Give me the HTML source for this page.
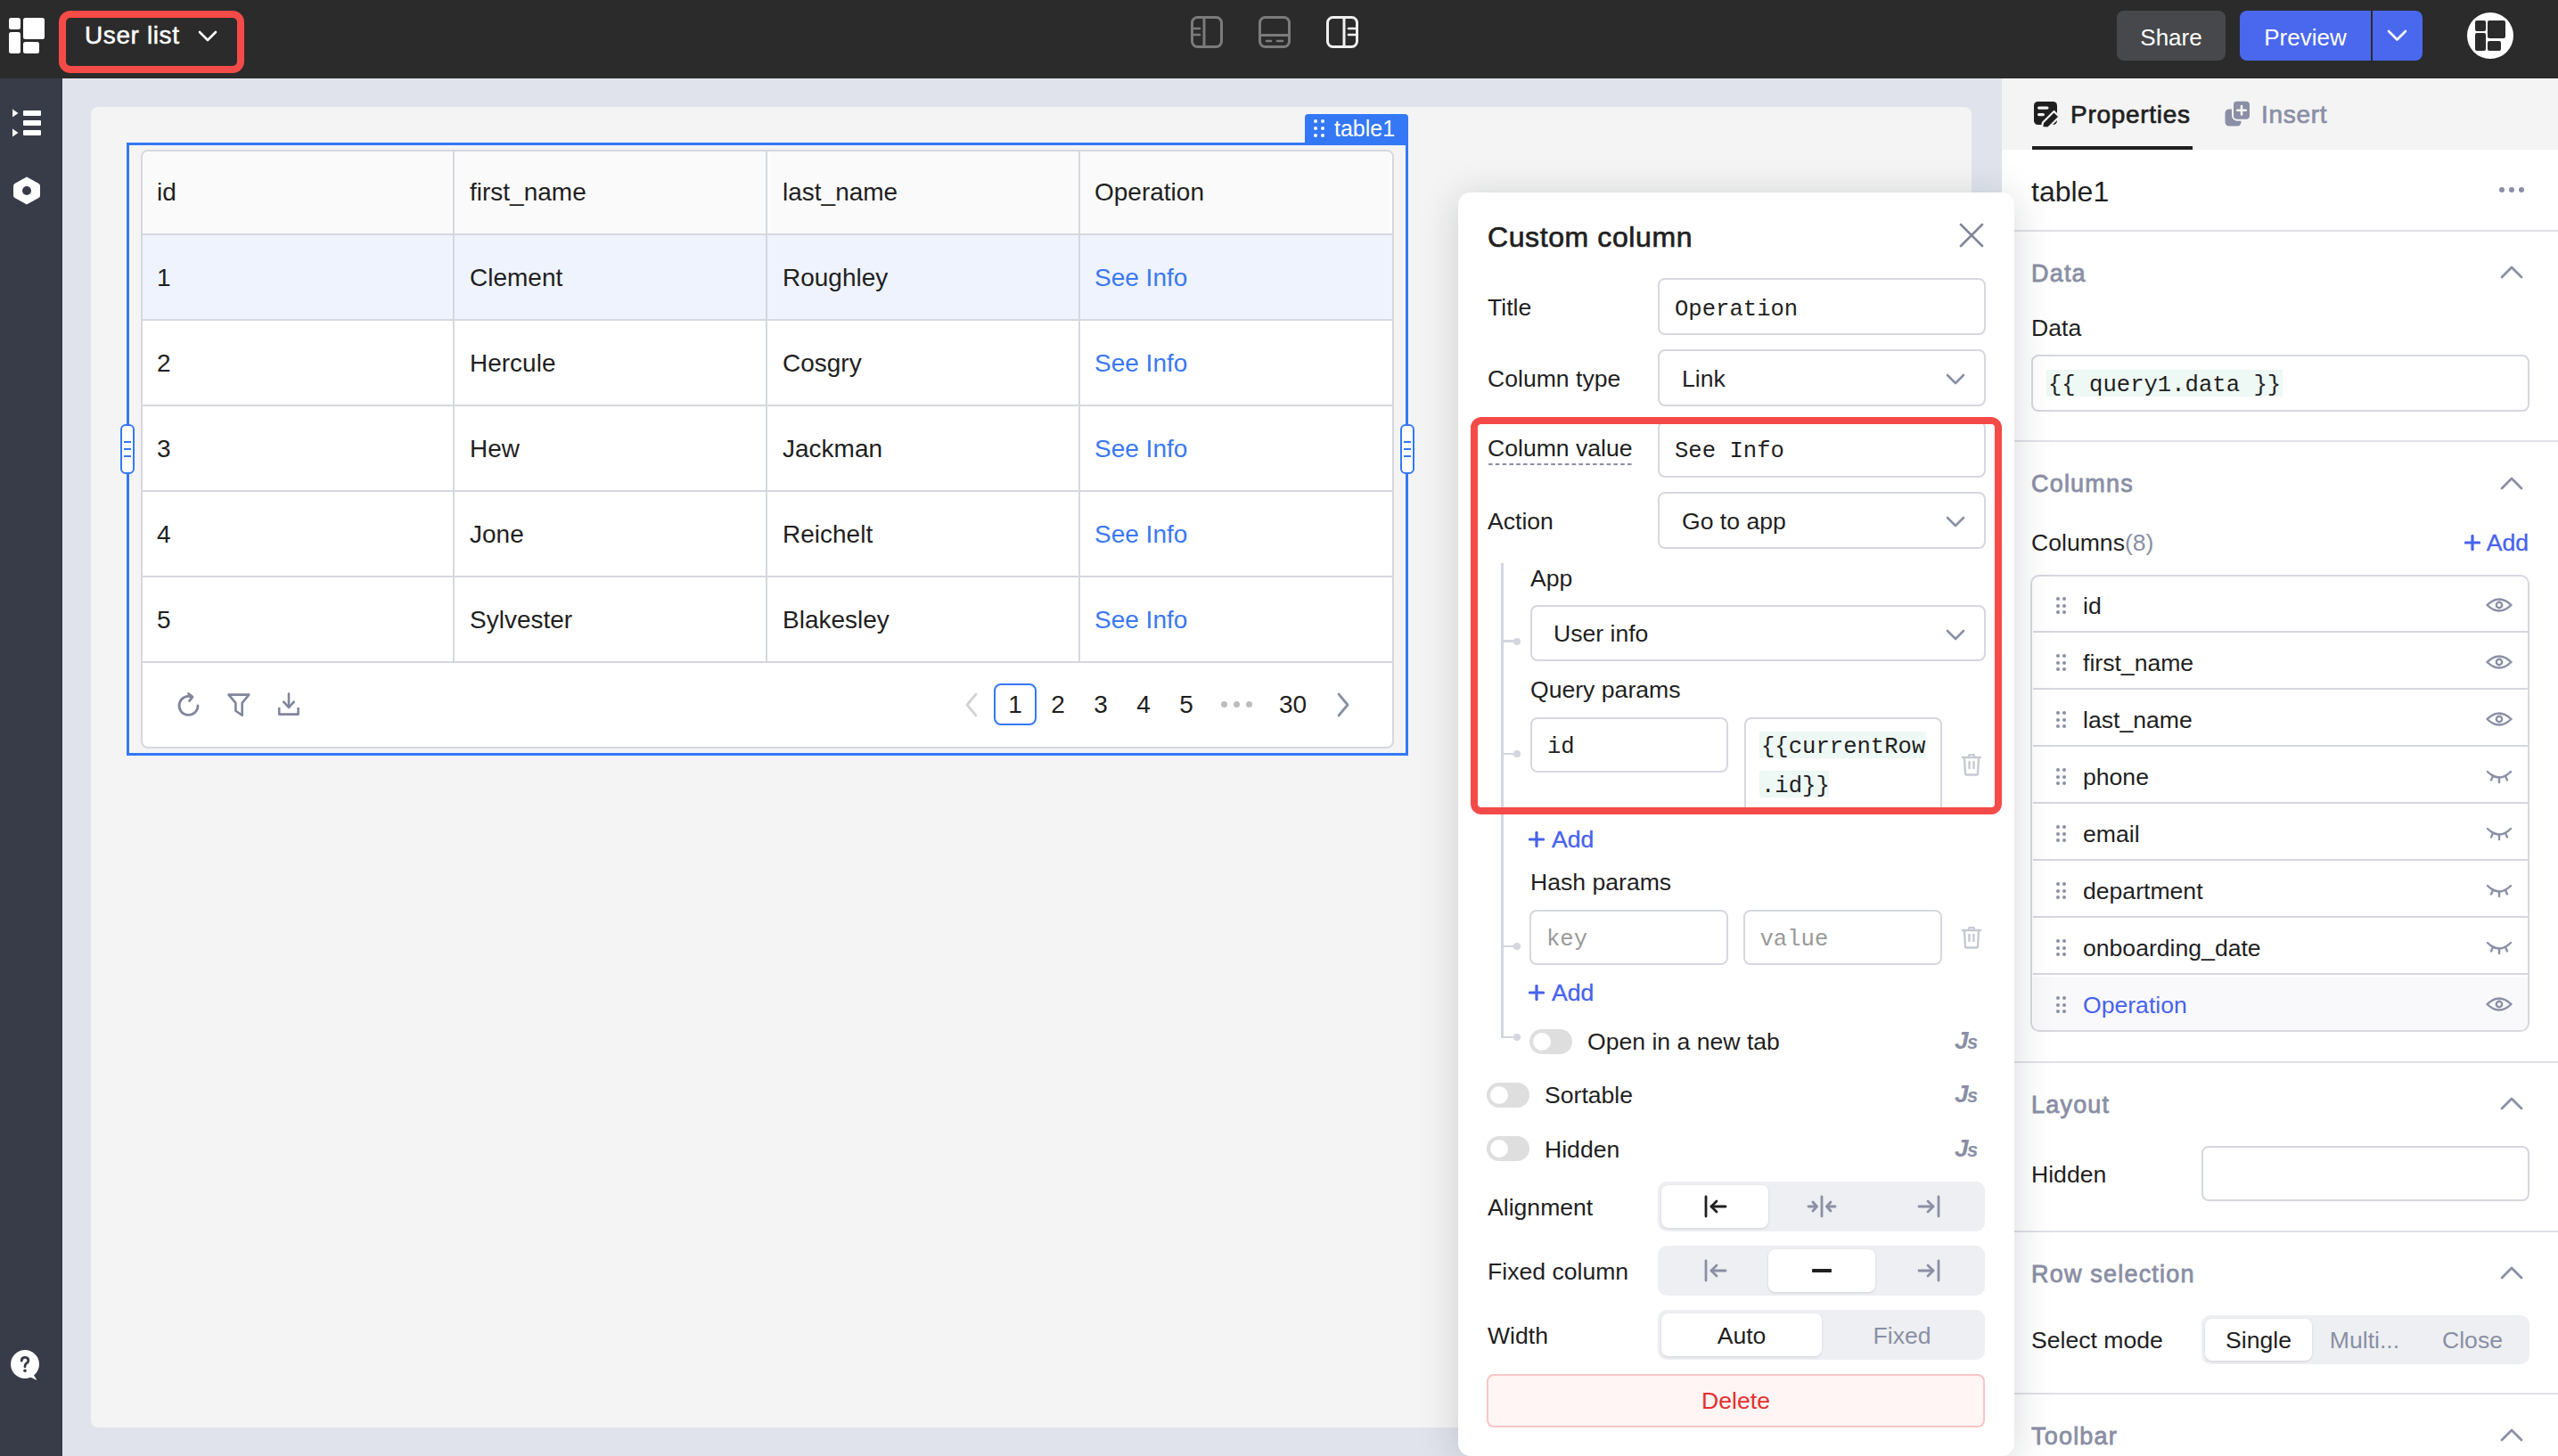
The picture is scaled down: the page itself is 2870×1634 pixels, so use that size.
<!DOCTYPE html>
<html><head><meta charset="utf-8"><title>User list</title>
<style>
html,body{margin:0;padding:0;}
body{width:2870px;height:1634px;overflow:hidden;position:relative;background:#e0e3eb;font-family:'Liberation Sans', sans-serif;}
</style></head><body>
<div style="position:absolute;left:0px;top:0px;width:2870px;height:88px;background:#2b2b2b"></div>
<div style="position:absolute;left:10px;top:20px;width:13px;height:13px;background:#fff;border-radius:2.5px"></div>
<div style="position:absolute;left:26px;top:20px;width:24px;height:24px;background:#fff;border-radius:2.5px"></div>
<div style="position:absolute;left:10px;top:36px;width:13px;height:24px;background:#fff;border-radius:2.5px"></div>
<div style="position:absolute;left:26px;top:47px;width:18px;height:13px;background:#fff;border-radius:2.5px"></div>
<div style="position:absolute;left:66px;top:12px;width:208px;height:70px;box-sizing:border-box;border:8px solid #f54b48;border-radius:13px"></div>
<div style="position:absolute;left:95px;top:26.30px;font:400 28px/28px 'Liberation Sans', sans-serif;color:#fff;white-space:nowrap;-webkit-text-stroke:0.5px #fff;letter-spacing:0.6px">User list</div>
<svg style="position:absolute;left:220px;top:30px;" width="26" height="20" viewBox="0 0 26 20"><polyline points="4,6 13,15 22,6" fill="none" stroke="#fff" stroke-width="2.6" stroke-linecap="round" stroke-linejoin="round"/></svg>
<svg style="position:absolute;left:1334px;top:16px;" width="40" height="40" viewBox="0 0 40 40"><rect x="3.5" y="3.5" width="33" height="33" rx="6" fill="none" stroke="#7b7b7b" stroke-width="3"/><line x1="17" y1="4" x2="17" y2="36" stroke="#7b7b7b" stroke-width="3"/><line x1="4" y1="16" x2="12" y2="16" stroke="#7b7b7b" stroke-width="2.6" stroke-linecap="round"/><line x1="4" y1="23" x2="12" y2="23" stroke="#7b7b7b" stroke-width="2.6" stroke-linecap="round"/></svg>
<svg style="position:absolute;left:1410px;top:16px;" width="40" height="40" viewBox="0 0 40 40"><rect x="3.5" y="3.5" width="33" height="33" rx="6" fill="none" stroke="#7b7b7b" stroke-width="3"/><line x1="4" y1="23.5" x2="36" y2="23.5" stroke="#7b7b7b" stroke-width="3"/><line x1="11" y1="30" x2="16" y2="30" stroke="#7b7b7b" stroke-width="2.6" stroke-linecap="round"/><line x1="23" y1="30" x2="29" y2="30" stroke="#7b7b7b" stroke-width="2.6" stroke-linecap="round"/></svg>
<svg style="position:absolute;left:1486px;top:16px;" width="40" height="40" viewBox="0 0 40 40"><rect x="3.5" y="3.5" width="33" height="33" rx="6" fill="none" stroke="#f0f0f0" stroke-width="3"/><line x1="22" y1="4" x2="22" y2="36" stroke="#f0f0f0" stroke-width="3"/><line x1="27" y1="16" x2="35" y2="16" stroke="#f0f0f0" stroke-width="2.6" stroke-linecap="round"/><line x1="27" y1="23" x2="35" y2="23" stroke="#f0f0f0" stroke-width="2.6" stroke-linecap="round"/></svg>
<div style="position:absolute;left:2375px;top:12px;width:122px;height:56px;background:#47484c;border-radius:8px"></div>
<div style="position:absolute;left:2036px;width:800px;text-align:center;top:28.99px;font:400 26px/26px 'Liberation Sans', sans-serif;color:#fff;white-space:nowrap;">Share</div>
<div style="position:absolute;left:2513px;top:12px;width:205px;height:56px;background:#4a68ee;border-radius:8px"></div>
<div style="position:absolute;left:2660px;top:12px;width:2px;height:56px;background:#2b2b2b"></div>
<div style="position:absolute;left:2186.5px;width:800px;text-align:center;top:28.99px;font:400 26px/26px 'Liberation Sans', sans-serif;color:#fff;white-space:nowrap;">Preview</div>
<svg style="position:absolute;left:2676px;top:30px;" width="28" height="20" viewBox="0 0 28 20"><polyline points="4,5 13.5,14.5 23,5" fill="none" stroke="#fff" stroke-width="2.6" stroke-linecap="round" stroke-linejoin="round"/></svg>
<div style="position:absolute;left:2768px;top:14px;width:52px;height:52px;background:#fff;border-radius:50%"></div>
<div style="position:absolute;left:2777px;top:23px;width:12px;height:12px;background:#2b2b2b;border-radius:2px"></div>
<div style="position:absolute;left:2791px;top:23px;width:20px;height:20px;background:#2b2b2b;border-radius:2px"></div>
<div style="position:absolute;left:2777px;top:37px;width:12px;height:20px;background:#2b2b2b;border-radius:2px"></div>
<div style="position:absolute;left:2791px;top:46px;width:15px;height:11px;background:#2b2b2b;border-radius:2px"></div>
<div style="position:absolute;left:0px;top:88px;width:70px;height:1546px;background:#383b48"></div>
<div style="position:absolute;left:70px;top:88px;width:1px;height:1546px;background:#e8eaf0"></div>
<svg style="position:absolute;left:12px;top:120px;" width="40" height="36" viewBox="0 0 40 36"><polygon points="2,2.5 8.5,7 2,11.5" fill="#fff"/><polygon points="2,24.5 8.5,29 2,33.5" fill="#fff"/><rect x="14" y="4" width="20" height="6" rx="1" fill="#fff"/><rect x="14" y="15" width="20" height="6" rx="1" fill="#fff"/><rect x="14" y="26" width="20" height="6" rx="1" fill="#fff"/></svg>
<svg style="position:absolute;left:12px;top:196px;" width="36" height="36" viewBox="0 0 36 36"><path d="M18 2.5 L31.5 10 Q33 11 33 12.5 L33 23.5 Q33 25 31.5 26 L18 33.5 L4.5 26 Q3 25 3 23.5 L3 12.5 Q3 11 4.5 10 Z" fill="#fff"/><circle cx="18" cy="18" r="5" fill="#383b48"/></svg>
<svg style="position:absolute;left:10px;top:1513px;" width="36" height="38" viewBox="0 0 36 38"><circle cx="18" cy="18" r="16" fill="#fff"/><path d="M25 27 Q29 31 31.5 36 Q27 34 21 31 Z" fill="#fff"/><path d="M14.2 14.2 Q14.2 10.3 18 10.3 Q21.8 10.3 21.8 13.8 Q21.8 16 19.3 17.3 Q18 18.2 18 20.8" fill="none" stroke="#383b48" stroke-width="2.8" stroke-linecap="round"/><circle cx="18" cy="25.2" r="1.8" fill="#383b48"/></svg>
<div style="position:absolute;left:102px;top:120px;width:2110px;height:1482px;background:#f4f4f4;border-radius:8px"></div>
<div style="position:absolute;left:158px;top:168px;width:1406px;height:672px;box-sizing:border-box;border:2px solid #d6d8df;border-radius:8px;background:#fff;overflow:hidden"></div>
<div style="position:absolute;left:160px;top:170px;width:1402px;height:92px;background:#fafafa;border-radius:6px 6px 0 0"></div>
<div style="position:absolute;left:160px;top:264px;width:1402px;height:94px;background:#eef3fe"></div>
<div style="position:absolute;left:160px;top:262px;width:1402px;height:2px;background:#d6d8df"></div>
<div style="position:absolute;left:160px;top:358px;width:1402px;height:2px;background:#d6d8df"></div>
<div style="position:absolute;left:160px;top:454px;width:1402px;height:2px;background:#d6d8df"></div>
<div style="position:absolute;left:160px;top:550px;width:1402px;height:2px;background:#d6d8df"></div>
<div style="position:absolute;left:160px;top:646px;width:1402px;height:2px;background:#d6d8df"></div>
<div style="position:absolute;left:160px;top:742px;width:1402px;height:2px;background:#d6d8df"></div>
<div style="position:absolute;left:508px;top:170px;width:2px;height:574px;background:#d6d8df"></div>
<div style="position:absolute;left:859px;top:170px;width:2px;height:574px;background:#d6d8df"></div>
<div style="position:absolute;left:1210px;top:170px;width:2px;height:574px;background:#d6d8df"></div>
<div style="position:absolute;left:176px;top:202.30px;font:400 28px/28px 'Liberation Sans', sans-serif;color:#1f1f1f;white-space:nowrap;">id</div>
<div style="position:absolute;left:527px;top:202.30px;font:400 28px/28px 'Liberation Sans', sans-serif;color:#1f1f1f;white-space:nowrap;">first_name</div>
<div style="position:absolute;left:878px;top:202.30px;font:400 28px/28px 'Liberation Sans', sans-serif;color:#1f1f1f;white-space:nowrap;">last_name</div>
<div style="position:absolute;left:1228px;top:202.30px;font:400 28px/28px 'Liberation Sans', sans-serif;color:#1f1f1f;white-space:nowrap;">Operation</div>
<div style="position:absolute;left:176px;top:297.80px;font:400 28px/28px 'Liberation Sans', sans-serif;color:#1f1f1f;white-space:nowrap;">1</div>
<div style="position:absolute;left:527px;top:297.80px;font:400 28px/28px 'Liberation Sans', sans-serif;color:#1f1f1f;white-space:nowrap;">Clement</div>
<div style="position:absolute;left:878px;top:297.80px;font:400 28px/28px 'Liberation Sans', sans-serif;color:#1f1f1f;white-space:nowrap;">Roughley</div>
<div style="position:absolute;left:1228px;top:297.80px;font:400 28px/28px 'Liberation Sans', sans-serif;color:#3a78f2;white-space:nowrap;">See Info</div>
<div style="position:absolute;left:176px;top:393.80px;font:400 28px/28px 'Liberation Sans', sans-serif;color:#1f1f1f;white-space:nowrap;">2</div>
<div style="position:absolute;left:527px;top:393.80px;font:400 28px/28px 'Liberation Sans', sans-serif;color:#1f1f1f;white-space:nowrap;">Hercule</div>
<div style="position:absolute;left:878px;top:393.80px;font:400 28px/28px 'Liberation Sans', sans-serif;color:#1f1f1f;white-space:nowrap;">Cosgry</div>
<div style="position:absolute;left:1228px;top:393.80px;font:400 28px/28px 'Liberation Sans', sans-serif;color:#3a78f2;white-space:nowrap;">See Info</div>
<div style="position:absolute;left:176px;top:489.80px;font:400 28px/28px 'Liberation Sans', sans-serif;color:#1f1f1f;white-space:nowrap;">3</div>
<div style="position:absolute;left:527px;top:489.80px;font:400 28px/28px 'Liberation Sans', sans-serif;color:#1f1f1f;white-space:nowrap;">Hew</div>
<div style="position:absolute;left:878px;top:489.80px;font:400 28px/28px 'Liberation Sans', sans-serif;color:#1f1f1f;white-space:nowrap;">Jackman</div>
<div style="position:absolute;left:1228px;top:489.80px;font:400 28px/28px 'Liberation Sans', sans-serif;color:#3a78f2;white-space:nowrap;">See Info</div>
<div style="position:absolute;left:176px;top:585.80px;font:400 28px/28px 'Liberation Sans', sans-serif;color:#1f1f1f;white-space:nowrap;">4</div>
<div style="position:absolute;left:527px;top:585.80px;font:400 28px/28px 'Liberation Sans', sans-serif;color:#1f1f1f;white-space:nowrap;">Jone</div>
<div style="position:absolute;left:878px;top:585.80px;font:400 28px/28px 'Liberation Sans', sans-serif;color:#1f1f1f;white-space:nowrap;">Reichelt</div>
<div style="position:absolute;left:1228px;top:585.80px;font:400 28px/28px 'Liberation Sans', sans-serif;color:#3a78f2;white-space:nowrap;">See Info</div>
<div style="position:absolute;left:176px;top:681.80px;font:400 28px/28px 'Liberation Sans', sans-serif;color:#1f1f1f;white-space:nowrap;">5</div>
<div style="position:absolute;left:527px;top:681.80px;font:400 28px/28px 'Liberation Sans', sans-serif;color:#1f1f1f;white-space:nowrap;">Sylvester</div>
<div style="position:absolute;left:878px;top:681.80px;font:400 28px/28px 'Liberation Sans', sans-serif;color:#1f1f1f;white-space:nowrap;">Blakesley</div>
<div style="position:absolute;left:1228px;top:681.80px;font:400 28px/28px 'Liberation Sans', sans-serif;color:#3a78f2;white-space:nowrap;">See Info</div>
<svg style="position:absolute;left:196px;top:776px;" width="32" height="32" viewBox="0 0 32 32"><path d="M26 16 A10.5 10.5 0 1 1 19.5 6.2" fill="none" stroke="#80859a" stroke-width="2.8" stroke-linecap="round"/><polyline points="15.5,2.5 20,6.2 16.5,10.5" fill="none" stroke="#80859a" stroke-width="2.8" stroke-linecap="round" stroke-linejoin="round"/></svg>
<svg style="position:absolute;left:252px;top:776px;" width="32" height="32" viewBox="0 0 32 32"><path d="M4.5 3.6 L27.3 3.6 L19.7 12.8 L19.7 26.8 L12.4 21.8 L12.4 12.8 Z" fill="none" stroke="#80859a" stroke-width="2.6" stroke-linejoin="round"/></svg>
<svg style="position:absolute;left:308px;top:776px;" width="32" height="32" viewBox="0 0 32 32"><line x1="16" y1="2.5" x2="16" y2="18" stroke="#80859a" stroke-width="2.6" stroke-linecap="round"/><polyline points="10.2,11.6 16,17.8 21.8,11.6" fill="none" stroke="#80859a" stroke-width="2.6" stroke-linecap="round" stroke-linejoin="round"/><polyline points="5.2,18 5.2,25.6 26.6,25.6 26.6,18" fill="none" stroke="#80859a" stroke-width="2.6" stroke-linejoin="round"/></svg>
<svg style="position:absolute;left:1080px;top:776px;" width="20" height="30" viewBox="0 0 20 30"><polyline points="15,3 5,15 15,27" fill="none" stroke="#d3d3d3" stroke-width="2.8" stroke-linecap="round" stroke-linejoin="round"/></svg>
<div style="position:absolute;left:1115px;top:767px;width:48px;height:47px;box-sizing:border-box;border:2px solid #3478f6;border-radius:8px"></div>
<div style="position:absolute;left:739px;width:800px;text-align:center;top:777.30px;font:400 28px/28px 'Liberation Sans', sans-serif;color:#1f1f1f;white-space:nowrap;">1</div>
<div style="position:absolute;left:787px;width:800px;text-align:center;top:777.30px;font:400 28px/28px 'Liberation Sans', sans-serif;color:#1f1f1f;white-space:nowrap;">2</div>
<div style="position:absolute;left:835px;width:800px;text-align:center;top:777.30px;font:400 28px/28px 'Liberation Sans', sans-serif;color:#1f1f1f;white-space:nowrap;">3</div>
<div style="position:absolute;left:883px;width:800px;text-align:center;top:777.30px;font:400 28px/28px 'Liberation Sans', sans-serif;color:#1f1f1f;white-space:nowrap;">4</div>
<div style="position:absolute;left:931px;width:800px;text-align:center;top:777.30px;font:400 28px/28px 'Liberation Sans', sans-serif;color:#1f1f1f;white-space:nowrap;">5</div>
<div style="position:absolute;left:1050.5px;width:800px;text-align:center;top:777.30px;font:400 28px/28px 'Liberation Sans', sans-serif;color:#1f1f1f;white-space:nowrap;">30</div>
<div style="position:absolute;left:1370.0px;top:786.5px;width:7px;height:7px;background:#bdbdbd;border-radius:50%"></div>
<div style="position:absolute;left:1384.0px;top:786.5px;width:7px;height:7px;background:#bdbdbd;border-radius:50%"></div>
<div style="position:absolute;left:1398.0px;top:786.5px;width:7px;height:7px;background:#bdbdbd;border-radius:50%"></div>
<svg style="position:absolute;left:1497px;top:776px;" width="20" height="30" viewBox="0 0 20 30"><polyline points="5,3 15,15 5,27" fill="none" stroke="#8a8fa3" stroke-width="2.8" stroke-linecap="round" stroke-linejoin="round"/></svg>
<div style="position:absolute;left:142px;top:160px;width:1438px;height:688px;box-sizing:border-box;border:3px solid #3478f6"></div>
<div style="position:absolute;left:1464px;top:128px;width:116px;height:35px;background:#3478f6;border-radius:4px 4px 0 0"></div>
<div style="position:absolute;left:1474px;top:134px;width:4px;height:4px;background:#fff;border-radius:50%"></div>
<div style="position:absolute;left:1474px;top:142px;width:4px;height:4px;background:#fff;border-radius:50%"></div>
<div style="position:absolute;left:1474px;top:150px;width:4px;height:4px;background:#fff;border-radius:50%"></div>
<div style="position:absolute;left:1482px;top:134px;width:4px;height:4px;background:#fff;border-radius:50%"></div>
<div style="position:absolute;left:1482px;top:142px;width:4px;height:4px;background:#fff;border-radius:50%"></div>
<div style="position:absolute;left:1482px;top:150px;width:4px;height:4px;background:#fff;border-radius:50%"></div>
<div style="position:absolute;left:1497px;top:131.84px;font:400 25px/25px 'Liberation Sans', sans-serif;color:#fff;white-space:nowrap;">table1</div>
<div style="position:absolute;left:135px;top:476px;width:16px;height:56px;box-sizing:border-box;border:2px solid #3478f6;border-radius:6px;background:#fff"></div>
<div style="position:absolute;left:139px;top:495px;width:8px;height:2px;background:#3478f6"></div>
<div style="position:absolute;left:139px;top:503px;width:8px;height:2px;background:#3478f6"></div>
<div style="position:absolute;left:139px;top:511px;width:8px;height:2px;background:#3478f6"></div>
<div style="position:absolute;left:1571px;top:476px;width:16px;height:56px;box-sizing:border-box;border:2px solid #3478f6;border-radius:6px;background:#fff"></div>
<div style="position:absolute;left:1575px;top:495px;width:8px;height:2px;background:#3478f6"></div>
<div style="position:absolute;left:1575px;top:503px;width:8px;height:2px;background:#3478f6"></div>
<div style="position:absolute;left:1575px;top:511px;width:8px;height:2px;background:#3478f6"></div>
<div style="position:absolute;left:2246px;top:88px;width:624px;height:1546px;background:#fff;z-index:0"></div>
<div style="position:absolute;left:2246px;top:88px;width:624px;height:80px;background:#f4f4f4"></div>
<svg style="position:absolute;left:2280px;top:112px;" width="32" height="32" viewBox="0 0 32 32"><rect x="2" y="2" width="26" height="26" rx="4.5" fill="#1f1f1f"/><rect x="6" y="7.5" width="12.5" height="3.2" rx="1.6" fill="#f4f4f4"/><rect x="6" y="15" width="8" height="3.2" rx="1.6" fill="#f4f4f4"/><path d="M11 31 L12 25.5 L24.5 13 L30.5 19 L18 31.5 Z" fill="#1f1f1f" stroke="#f4f4f4" stroke-width="2.2" stroke-linejoin="round"/></svg>
<div style="position:absolute;left:2323px;top:115.30px;font:400 28px/28px 'Liberation Sans', sans-serif;color:#1f1f1f;white-space:nowrap;-webkit-text-stroke:0.7px #1f1f1f;letter-spacing:0.7px">Properties</div>
<div style="position:absolute;left:2280px;top:164px;width:180px;height:4px;background:#1f1f1f"></div>
<svg style="position:absolute;left:2494px;top:112px;" width="32" height="32" viewBox="0 0 32 32"><rect x="2.5" y="10.5" width="18" height="19" rx="4.5" fill="#8a8fa5"/><rect x="11" y="0.8" width="20" height="22" rx="5" fill="#8a8fa5" stroke="#f4f4f4" stroke-width="2"/><line x1="21" y1="7" x2="21" y2="16.5" stroke="#f4f4f4" stroke-width="2.6" stroke-linecap="round"/><line x1="16.2" y1="11.8" x2="25.8" y2="11.8" stroke="#f4f4f4" stroke-width="2.6" stroke-linecap="round"/></svg>
<div style="position:absolute;left:2537px;top:115.30px;font:400 28px/28px 'Liberation Sans', sans-serif;color:#8a8fa5;white-space:nowrap;-webkit-text-stroke:0.7px #8a8fa5;letter-spacing:0.7px">Insert</div>
<div style="position:absolute;left:2279px;top:198.91px;font:400 32px/32px 'Liberation Sans', sans-serif;color:#1f1f1f;white-space:nowrap;">table1</div>
<div style="position:absolute;left:2804px;top:209.5px;width:6px;height:6px;background:#8a8fa5;border-radius:50%"></div>
<div style="position:absolute;left:2815px;top:209.5px;width:6px;height:6px;background:#8a8fa5;border-radius:50%"></div>
<div style="position:absolute;left:2826px;top:209.5px;width:6px;height:6px;background:#8a8fa5;border-radius:50%"></div>
<div style="position:absolute;left:2246px;top:258px;width:624px;height:2px;background:#dfe1e7"></div>
<div style="position:absolute;left:2279px;top:294.14px;font:400 27px/27px 'Liberation Sans', sans-serif;color:#8a8fa5;white-space:nowrap;-webkit-text-stroke:0.8px #8a8fa5;letter-spacing:1.2px">Data</div>
<svg style="position:absolute;left:2804px;top:297px;" width="28" height="18" viewBox="0 0 28 18"><polyline points="3,14 14,3 25,14" fill="none" stroke="#8a8fa5" stroke-width="2.8" stroke-linecap="round" stroke-linejoin="round"/></svg>
<div style="position:absolute;left:2279px;top:355.48px;font:400 26.6px/26.6px 'Liberation Sans', sans-serif;color:#1f1f1f;white-space:nowrap;">Data</div>
<div style="position:absolute;left:2279px;top:398px;width:559px;height:64px;box-sizing:border-box;border:2px solid #d6d8df;border-radius:8px;background:#fff"></div>
<div style="position:absolute;left:2296px;top:415px;width:265px;height:30px;background:#eef8f4"></div>
<div style="position:absolute;left:2298px;top:420.39px;font:400 25.6px/25.6px 'Liberation Mono', monospace;color:#1f1f1f;white-space:nowrap;">{{ query1.data }}</div>
<div style="position:absolute;left:2246px;top:494px;width:624px;height:2px;background:#dfe1e7"></div>
<div style="position:absolute;left:2279px;top:530.14px;font:400 27px/27px 'Liberation Sans', sans-serif;color:#8a8fa5;white-space:nowrap;-webkit-text-stroke:0.8px #8a8fa5;letter-spacing:1.2px">Columns</div>
<svg style="position:absolute;left:2804px;top:533.5px;" width="28" height="18" viewBox="0 0 28 18"><polyline points="3,14 14,3 25,14" fill="none" stroke="#8a8fa5" stroke-width="2.8" stroke-linecap="round" stroke-linejoin="round"/></svg>
<div style="position:absolute;left:2279px;top:596.48px;font:400 26.6px/26.6px 'Liberation Sans', sans-serif;color:#1f1f1f;white-space:nowrap;">Columns<span style='color:#8a8fa5'>(8)</span></div>
<svg style="position:absolute;left:2765px;top:600px;" width="18" height="18" viewBox="0 0 18 18"><line x1="9" y1="1.5" x2="9" y2="16.5" stroke="#4762ee" stroke-width="3.2" stroke-linecap="round"/><line x1="1.5" y1="9" x2="16.5" y2="9" stroke="#4762ee" stroke-width="3.2" stroke-linecap="round"/></svg>
<div style="position:absolute;right:33px;top:596.48px;font:400 26.6px/26.6px 'Liberation Sans', sans-serif;color:#4762ee;white-space:nowrap;-webkit-text-stroke:0.3px #4762ee">Add</div>
<div style="position:absolute;left:2278px;top:645px;width:560px;height:513px;box-sizing:border-box;border:2px solid #d6d8df;border-radius:10px;overflow:hidden;background:#fff"></div>
<div style="position:absolute;left:2281px;top:1096px;width:555px;height:60px;background:#f9f9fb;border-radius:0 0 8px 8px"></div>
<div style="position:absolute;left:2307px;top:670px;width:4px;height:4px;background:#8a8fa5;border-radius:50%"></div>
<div style="position:absolute;left:2307px;top:677.5px;width:4px;height:4px;background:#8a8fa5;border-radius:50%"></div>
<div style="position:absolute;left:2307px;top:685px;width:4px;height:4px;background:#8a8fa5;border-radius:50%"></div>
<div style="position:absolute;left:2314px;top:670px;width:4px;height:4px;background:#8a8fa5;border-radius:50%"></div>
<div style="position:absolute;left:2314px;top:677.5px;width:4px;height:4px;background:#8a8fa5;border-radius:50%"></div>
<div style="position:absolute;left:2314px;top:685px;width:4px;height:4px;background:#8a8fa5;border-radius:50%"></div>
<div style="position:absolute;left:2337px;top:666.98px;font:400 26.6px/26.6px 'Liberation Sans', sans-serif;color:#1f1f1f;white-space:nowrap;">id</div>
<svg style="position:absolute;left:2788px;top:667px;" width="32" height="24" viewBox="0 0 32 24"><path d="M2.5 12 Q16 -1 29.5 12 Q16 25 2.5 12 Z" fill="none" stroke="#8a8fa5" stroke-width="2.4" stroke-linejoin="round"/><circle cx="16" cy="12" r="3.2" fill="none" stroke="#8a8fa5" stroke-width="2.4"/></svg>
<div style="position:absolute;left:2281px;top:708px;width:555px;height:2px;background:#d6d8df"></div>
<div style="position:absolute;left:2307px;top:734px;width:4px;height:4px;background:#8a8fa5;border-radius:50%"></div>
<div style="position:absolute;left:2307px;top:741.5px;width:4px;height:4px;background:#8a8fa5;border-radius:50%"></div>
<div style="position:absolute;left:2307px;top:749px;width:4px;height:4px;background:#8a8fa5;border-radius:50%"></div>
<div style="position:absolute;left:2314px;top:734px;width:4px;height:4px;background:#8a8fa5;border-radius:50%"></div>
<div style="position:absolute;left:2314px;top:741.5px;width:4px;height:4px;background:#8a8fa5;border-radius:50%"></div>
<div style="position:absolute;left:2314px;top:749px;width:4px;height:4px;background:#8a8fa5;border-radius:50%"></div>
<div style="position:absolute;left:2337px;top:730.98px;font:400 26.6px/26.6px 'Liberation Sans', sans-serif;color:#1f1f1f;white-space:nowrap;">first_name</div>
<svg style="position:absolute;left:2788px;top:731px;" width="32" height="24" viewBox="0 0 32 24"><path d="M2.5 12 Q16 -1 29.5 12 Q16 25 2.5 12 Z" fill="none" stroke="#8a8fa5" stroke-width="2.4" stroke-linejoin="round"/><circle cx="16" cy="12" r="3.2" fill="none" stroke="#8a8fa5" stroke-width="2.4"/></svg>
<div style="position:absolute;left:2281px;top:772px;width:555px;height:2px;background:#d6d8df"></div>
<div style="position:absolute;left:2307px;top:798px;width:4px;height:4px;background:#8a8fa5;border-radius:50%"></div>
<div style="position:absolute;left:2307px;top:805.5px;width:4px;height:4px;background:#8a8fa5;border-radius:50%"></div>
<div style="position:absolute;left:2307px;top:813px;width:4px;height:4px;background:#8a8fa5;border-radius:50%"></div>
<div style="position:absolute;left:2314px;top:798px;width:4px;height:4px;background:#8a8fa5;border-radius:50%"></div>
<div style="position:absolute;left:2314px;top:805.5px;width:4px;height:4px;background:#8a8fa5;border-radius:50%"></div>
<div style="position:absolute;left:2314px;top:813px;width:4px;height:4px;background:#8a8fa5;border-radius:50%"></div>
<div style="position:absolute;left:2337px;top:794.98px;font:400 26.6px/26.6px 'Liberation Sans', sans-serif;color:#1f1f1f;white-space:nowrap;">last_name</div>
<svg style="position:absolute;left:2788px;top:795px;" width="32" height="24" viewBox="0 0 32 24"><path d="M2.5 12 Q16 -1 29.5 12 Q16 25 2.5 12 Z" fill="none" stroke="#8a8fa5" stroke-width="2.4" stroke-linejoin="round"/><circle cx="16" cy="12" r="3.2" fill="none" stroke="#8a8fa5" stroke-width="2.4"/></svg>
<div style="position:absolute;left:2281px;top:836px;width:555px;height:2px;background:#d6d8df"></div>
<div style="position:absolute;left:2307px;top:862px;width:4px;height:4px;background:#8a8fa5;border-radius:50%"></div>
<div style="position:absolute;left:2307px;top:869.5px;width:4px;height:4px;background:#8a8fa5;border-radius:50%"></div>
<div style="position:absolute;left:2307px;top:877px;width:4px;height:4px;background:#8a8fa5;border-radius:50%"></div>
<div style="position:absolute;left:2314px;top:862px;width:4px;height:4px;background:#8a8fa5;border-radius:50%"></div>
<div style="position:absolute;left:2314px;top:869.5px;width:4px;height:4px;background:#8a8fa5;border-radius:50%"></div>
<div style="position:absolute;left:2314px;top:877px;width:4px;height:4px;background:#8a8fa5;border-radius:50%"></div>
<div style="position:absolute;left:2337px;top:858.98px;font:400 26.6px/26.6px 'Liberation Sans', sans-serif;color:#1f1f1f;white-space:nowrap;">phone</div>
<svg style="position:absolute;left:2788px;top:859px;" width="32" height="24" viewBox="0 0 32 24"><path d="M3 7 Q16 20 29 7" fill="none" stroke="#8a8fa5" stroke-width="2.4" stroke-linecap="round"/><line x1="16" y1="14" x2="16" y2="19" stroke="#8a8fa5" stroke-width="2.4" stroke-linecap="round"/><line x1="9" y1="12" x2="7" y2="16.5" stroke="#8a8fa5" stroke-width="2.4" stroke-linecap="round"/><line x1="23" y1="12" x2="25" y2="16.5" stroke="#8a8fa5" stroke-width="2.4" stroke-linecap="round"/></svg>
<div style="position:absolute;left:2281px;top:900px;width:555px;height:2px;background:#d6d8df"></div>
<div style="position:absolute;left:2307px;top:926px;width:4px;height:4px;background:#8a8fa5;border-radius:50%"></div>
<div style="position:absolute;left:2307px;top:933.5px;width:4px;height:4px;background:#8a8fa5;border-radius:50%"></div>
<div style="position:absolute;left:2307px;top:941px;width:4px;height:4px;background:#8a8fa5;border-radius:50%"></div>
<div style="position:absolute;left:2314px;top:926px;width:4px;height:4px;background:#8a8fa5;border-radius:50%"></div>
<div style="position:absolute;left:2314px;top:933.5px;width:4px;height:4px;background:#8a8fa5;border-radius:50%"></div>
<div style="position:absolute;left:2314px;top:941px;width:4px;height:4px;background:#8a8fa5;border-radius:50%"></div>
<div style="position:absolute;left:2337px;top:922.98px;font:400 26.6px/26.6px 'Liberation Sans', sans-serif;color:#1f1f1f;white-space:nowrap;">email</div>
<svg style="position:absolute;left:2788px;top:923px;" width="32" height="24" viewBox="0 0 32 24"><path d="M3 7 Q16 20 29 7" fill="none" stroke="#8a8fa5" stroke-width="2.4" stroke-linecap="round"/><line x1="16" y1="14" x2="16" y2="19" stroke="#8a8fa5" stroke-width="2.4" stroke-linecap="round"/><line x1="9" y1="12" x2="7" y2="16.5" stroke="#8a8fa5" stroke-width="2.4" stroke-linecap="round"/><line x1="23" y1="12" x2="25" y2="16.5" stroke="#8a8fa5" stroke-width="2.4" stroke-linecap="round"/></svg>
<div style="position:absolute;left:2281px;top:964px;width:555px;height:2px;background:#d6d8df"></div>
<div style="position:absolute;left:2307px;top:990px;width:4px;height:4px;background:#8a8fa5;border-radius:50%"></div>
<div style="position:absolute;left:2307px;top:997.5px;width:4px;height:4px;background:#8a8fa5;border-radius:50%"></div>
<div style="position:absolute;left:2307px;top:1005px;width:4px;height:4px;background:#8a8fa5;border-radius:50%"></div>
<div style="position:absolute;left:2314px;top:990px;width:4px;height:4px;background:#8a8fa5;border-radius:50%"></div>
<div style="position:absolute;left:2314px;top:997.5px;width:4px;height:4px;background:#8a8fa5;border-radius:50%"></div>
<div style="position:absolute;left:2314px;top:1005px;width:4px;height:4px;background:#8a8fa5;border-radius:50%"></div>
<div style="position:absolute;left:2337px;top:986.98px;font:400 26.6px/26.6px 'Liberation Sans', sans-serif;color:#1f1f1f;white-space:nowrap;">department</div>
<svg style="position:absolute;left:2788px;top:987px;" width="32" height="24" viewBox="0 0 32 24"><path d="M3 7 Q16 20 29 7" fill="none" stroke="#8a8fa5" stroke-width="2.4" stroke-linecap="round"/><line x1="16" y1="14" x2="16" y2="19" stroke="#8a8fa5" stroke-width="2.4" stroke-linecap="round"/><line x1="9" y1="12" x2="7" y2="16.5" stroke="#8a8fa5" stroke-width="2.4" stroke-linecap="round"/><line x1="23" y1="12" x2="25" y2="16.5" stroke="#8a8fa5" stroke-width="2.4" stroke-linecap="round"/></svg>
<div style="position:absolute;left:2281px;top:1028px;width:555px;height:2px;background:#d6d8df"></div>
<div style="position:absolute;left:2307px;top:1054px;width:4px;height:4px;background:#8a8fa5;border-radius:50%"></div>
<div style="position:absolute;left:2307px;top:1061.5px;width:4px;height:4px;background:#8a8fa5;border-radius:50%"></div>
<div style="position:absolute;left:2307px;top:1069px;width:4px;height:4px;background:#8a8fa5;border-radius:50%"></div>
<div style="position:absolute;left:2314px;top:1054px;width:4px;height:4px;background:#8a8fa5;border-radius:50%"></div>
<div style="position:absolute;left:2314px;top:1061.5px;width:4px;height:4px;background:#8a8fa5;border-radius:50%"></div>
<div style="position:absolute;left:2314px;top:1069px;width:4px;height:4px;background:#8a8fa5;border-radius:50%"></div>
<div style="position:absolute;left:2337px;top:1050.98px;font:400 26.6px/26.6px 'Liberation Sans', sans-serif;color:#1f1f1f;white-space:nowrap;">onboarding_date</div>
<svg style="position:absolute;left:2788px;top:1051px;" width="32" height="24" viewBox="0 0 32 24"><path d="M3 7 Q16 20 29 7" fill="none" stroke="#8a8fa5" stroke-width="2.4" stroke-linecap="round"/><line x1="16" y1="14" x2="16" y2="19" stroke="#8a8fa5" stroke-width="2.4" stroke-linecap="round"/><line x1="9" y1="12" x2="7" y2="16.5" stroke="#8a8fa5" stroke-width="2.4" stroke-linecap="round"/><line x1="23" y1="12" x2="25" y2="16.5" stroke="#8a8fa5" stroke-width="2.4" stroke-linecap="round"/></svg>
<div style="position:absolute;left:2281px;top:1092px;width:555px;height:2px;background:#d6d8df"></div>
<div style="position:absolute;left:2307px;top:1118px;width:4px;height:4px;background:#8a8fa5;border-radius:50%"></div>
<div style="position:absolute;left:2307px;top:1125.5px;width:4px;height:4px;background:#8a8fa5;border-radius:50%"></div>
<div style="position:absolute;left:2307px;top:1133px;width:4px;height:4px;background:#8a8fa5;border-radius:50%"></div>
<div style="position:absolute;left:2314px;top:1118px;width:4px;height:4px;background:#8a8fa5;border-radius:50%"></div>
<div style="position:absolute;left:2314px;top:1125.5px;width:4px;height:4px;background:#8a8fa5;border-radius:50%"></div>
<div style="position:absolute;left:2314px;top:1133px;width:4px;height:4px;background:#8a8fa5;border-radius:50%"></div>
<div style="position:absolute;left:2337px;top:1114.98px;font:400 26.6px/26.6px 'Liberation Sans', sans-serif;color:#4762ee;white-space:nowrap;">Operation</div>
<svg style="position:absolute;left:2788px;top:1115px;" width="32" height="24" viewBox="0 0 32 24"><path d="M2.5 12 Q16 -1 29.5 12 Q16 25 2.5 12 Z" fill="none" stroke="#8a8fa5" stroke-width="2.4" stroke-linejoin="round"/><circle cx="16" cy="12" r="3.2" fill="none" stroke="#8a8fa5" stroke-width="2.4"/></svg>
<div style="position:absolute;left:2246px;top:1191px;width:624px;height:2px;background:#dfe1e7"></div>
<div style="position:absolute;left:2279px;top:1227.14px;font:400 27px/27px 'Liberation Sans', sans-serif;color:#8a8fa5;white-space:nowrap;-webkit-text-stroke:0.8px #8a8fa5;letter-spacing:1.2px">Layout</div>
<svg style="position:absolute;left:2804px;top:1230px;" width="28" height="18" viewBox="0 0 28 18"><polyline points="3,14 14,3 25,14" fill="none" stroke="#8a8fa5" stroke-width="2.8" stroke-linecap="round" stroke-linejoin="round"/></svg>
<div style="position:absolute;left:2279px;top:1305.48px;font:400 26.6px/26.6px 'Liberation Sans', sans-serif;color:#1f1f1f;white-space:nowrap;">Hidden</div>
<div style="position:absolute;left:2470px;top:1286px;width:368px;height:62px;box-sizing:border-box;border:2px solid #d6d8df;border-radius:8px;background:#fff"></div>
<div style="position:absolute;left:2246px;top:1380.5px;width:624px;height:2px;background:#dfe1e7"></div>
<div style="position:absolute;left:2279px;top:1416.64px;font:400 27px/27px 'Liberation Sans', sans-serif;color:#8a8fa5;white-space:nowrap;-webkit-text-stroke:0.8px #8a8fa5;letter-spacing:1.2px">Row selection</div>
<svg style="position:absolute;left:2804px;top:1420px;" width="28" height="18" viewBox="0 0 28 18"><polyline points="3,14 14,3 25,14" fill="none" stroke="#8a8fa5" stroke-width="2.8" stroke-linecap="round" stroke-linejoin="round"/></svg>
<div style="position:absolute;left:2279px;top:1490.98px;font:400 26.6px/26.6px 'Liberation Sans', sans-serif;color:#1f1f1f;white-space:nowrap;">Select mode</div>
<div style="position:absolute;left:2470px;top:1475.5px;width:368px;height:55px;background:#eeeff2;border-radius:10px"></div>
<div style="position:absolute;left:2474px;top:1479.5px;width:120px;height:47.5px;background:#fff;border-radius:8px;box-shadow:0 1px 3px rgba(0,0,0,0.12)"></div>
<div style="position:absolute;left:2134px;width:800px;text-align:center;top:1490.98px;font:400 26.6px/26.6px 'Liberation Sans', sans-serif;color:#1f1f1f;white-space:nowrap;">Single</div>
<div style="position:absolute;left:2253px;width:800px;text-align:center;top:1490.98px;font:400 26.6px/26.6px 'Liberation Sans', sans-serif;color:#8a8fa5;white-space:nowrap;">Multi...</div>
<div style="position:absolute;left:2374px;width:800px;text-align:center;top:1490.98px;font:400 26.6px/26.6px 'Liberation Sans', sans-serif;color:#8a8fa5;white-space:nowrap;">Close</div>
<div style="position:absolute;left:2246px;top:1563px;width:624px;height:2px;background:#dfe1e7"></div>
<div style="position:absolute;left:2279px;top:1598.64px;font:400 27px/27px 'Liberation Sans', sans-serif;color:#8a8fa5;white-space:nowrap;-webkit-text-stroke:0.8px #8a8fa5;letter-spacing:1.2px">Toolbar</div>
<svg style="position:absolute;left:2804px;top:1602px;" width="28" height="18" viewBox="0 0 28 18"><polyline points="3,14 14,3 25,14" fill="none" stroke="#8a8fa5" stroke-width="2.8" stroke-linecap="round" stroke-linejoin="round"/></svg>
<div style="position:absolute;left:1636px;top:216px;width:624px;height:1418px;background:#fff;border-radius:14px;box-shadow:0 6px 44px rgba(20,24,40,0.17)"></div>
<div style="position:absolute;left:1669px;top:249.91px;font:400 32px/32px 'Liberation Sans', sans-serif;color:#1f1f1f;white-space:nowrap;-webkit-text-stroke:0.7px #1f1f1f;letter-spacing:0.6px">Custom column</div>
<svg style="position:absolute;left:2196px;top:248px;" width="32" height="32" viewBox="0 0 32 32"><line x1="4" y1="4" x2="28" y2="28" stroke="#80859a" stroke-width="2.6" stroke-linecap="round"/><line x1="28" y1="4" x2="4" y2="28" stroke="#80859a" stroke-width="2.6" stroke-linecap="round"/></svg>
<div style="position:absolute;left:1669px;top:332.48px;font:400 26.6px/26.6px 'Liberation Sans', sans-serif;color:#1f1f1f;white-space:nowrap;">Title</div>
<div style="position:absolute;left:1860px;top:312px;width:368px;height:64px;box-sizing:border-box;border:2px solid #d6d8df;border-radius:8px;background:#fff"></div>
<div style="position:absolute;left:1879px;top:335.39px;font:400 25.6px/25.6px 'Liberation Mono', monospace;color:#1f1f1f;white-space:nowrap;">Operation</div>
<div style="position:absolute;left:1669px;top:411.98px;font:400 26.6px/26.6px 'Liberation Sans', sans-serif;color:#1f1f1f;white-space:nowrap;">Column type</div>
<div style="position:absolute;left:1860px;top:392px;width:368px;height:64px;box-sizing:border-box;border:2px solid #d6d8df;border-radius:8px;background:#fff"></div>
<div style="position:absolute;left:1887px;top:411.98px;font:400 26.6px/26.6px 'Liberation Sans', sans-serif;color:#1f1f1f;white-space:nowrap;">Link</div>
<svg style="position:absolute;left:2182px;top:418px;" width="24" height="16" viewBox="0 0 24 16"><polyline points="3,3 12,12 21,3" fill="none" stroke="#8a8fa5" stroke-width="2.6" stroke-linecap="round" stroke-linejoin="round"/></svg>
<div style="position:absolute;left:1669px;top:490.48px;font:400 26.6px/26.6px 'Liberation Sans', sans-serif;color:#1f1f1f;white-space:nowrap;">Column value</div>
<svg style="position:absolute;left:1669px;top:519px;" width="164" height="4" viewBox="0 0 164 4"><line x1="1" y1="2" x2="163" y2="2" stroke="#8a8fa5" stroke-width="2" stroke-dasharray="4.6 3.2"/></svg>
<div style="position:absolute;left:1860px;top:472px;width:368px;height:64px;box-sizing:border-box;border:2px solid #d6d8df;border-radius:8px;background:#fff"></div>
<div style="position:absolute;left:1879px;top:494.39px;font:400 25.6px/25.6px 'Liberation Mono', monospace;color:#1f1f1f;white-space:nowrap;">See Info</div>
<div style="position:absolute;left:1669px;top:572.48px;font:400 26.6px/26.6px 'Liberation Sans', sans-serif;color:#1f1f1f;white-space:nowrap;">Action</div>
<div style="position:absolute;left:1860px;top:552px;width:368px;height:64px;box-sizing:border-box;border:2px solid #d6d8df;border-radius:8px;background:#fff"></div>
<div style="position:absolute;left:1887px;top:572.48px;font:400 26.6px/26.6px 'Liberation Sans', sans-serif;color:#1f1f1f;white-space:nowrap;">Go to app</div>
<svg style="position:absolute;left:2182px;top:578px;" width="24" height="16" viewBox="0 0 24 16"><polyline points="3,3 12,12 21,3" fill="none" stroke="#8a8fa5" stroke-width="2.6" stroke-linecap="round" stroke-linejoin="round"/></svg>
<div style="position:absolute;left:1684px;top:632px;width:2.5px;height:532px;background:#d3d6de"></div>
<div style="position:absolute;left:1686px;top:718.3px;width:14px;height:2.5px;background:#d3d6de"></div>
<div style="position:absolute;left:1698px;top:715.5px;width:8px;height:8px;background:#d3d6de;border-radius:50%"></div>
<div style="position:absolute;left:1686px;top:844.8px;width:14px;height:2.5px;background:#d3d6de"></div>
<div style="position:absolute;left:1698px;top:842px;width:8px;height:8px;background:#d3d6de;border-radius:50%"></div>
<div style="position:absolute;left:1686px;top:1060.8px;width:14px;height:2.5px;background:#d3d6de"></div>
<div style="position:absolute;left:1698px;top:1058px;width:8px;height:8px;background:#d3d6de;border-radius:50%"></div>
<div style="position:absolute;left:1684px;top:1162.8px;width:16px;height:2.5px;background:#d3d6de"></div>
<div style="position:absolute;left:1698px;top:1160px;width:8px;height:8px;background:#d3d6de;border-radius:50%"></div>
<div style="position:absolute;left:1717px;top:635.98px;font:400 26.6px/26.6px 'Liberation Sans', sans-serif;color:#1f1f1f;white-space:nowrap;">App</div>
<div style="position:absolute;left:1717px;top:679px;width:511px;height:63px;box-sizing:border-box;border:2px solid #d6d8df;border-radius:8px;background:#fff"></div>
<div style="position:absolute;left:1743px;top:698.48px;font:400 26.6px/26.6px 'Liberation Sans', sans-serif;color:#1f1f1f;white-space:nowrap;">User info</div>
<svg style="position:absolute;left:2182px;top:705px;" width="24" height="16" viewBox="0 0 24 16"><polyline points="3,3 12,12 21,3" fill="none" stroke="#8a8fa5" stroke-width="2.6" stroke-linecap="round" stroke-linejoin="round"/></svg>
<div style="position:absolute;left:1717px;top:761.48px;font:400 26.6px/26.6px 'Liberation Sans', sans-serif;color:#1f1f1f;white-space:nowrap;">Query params</div>
<div style="position:absolute;left:1717px;top:805px;width:222px;height:62px;box-sizing:border-box;border:2px solid #d6d8df;border-radius:8px;background:#fff"></div>
<div style="position:absolute;left:1736px;top:826.39px;font:400 25.6px/25.6px 'Liberation Mono', monospace;color:#1f1f1f;white-space:nowrap;">id</div>
<div style="position:absolute;left:1957px;top:805px;width:222px;height:108px;box-sizing:border-box;border:2px solid #d6d8df;border-radius:8px;background:#fff"></div>
<div style="position:absolute;left:1974px;top:821px;width:187px;height:30px;background:#eef8f4"></div>
<div style="position:absolute;left:1974px;top:865px;width:78px;height:30px;background:#eef8f4"></div>
<div style="position:absolute;left:1976px;top:826.39px;font:400 25.6px/25.6px 'Liberation Mono', monospace;color:#1f1f1f;white-space:nowrap;">{{currentRow</div>
<div style="position:absolute;left:1976px;top:869.89px;font:400 25.6px/25.6px 'Liberation Mono', monospace;color:#1f1f1f;white-space:nowrap;">.id}}</div>
<svg style="position:absolute;left:2199px;top:845px;" width="26" height="26" viewBox="0 0 26 26"><path d="M3 5 L23 5" stroke="#c6c9d3" stroke-width="2.4" stroke-linecap="round"/><path d="M9.5 5 L10.5 2 L15.5 2 L16.5 5" fill="none" stroke="#c6c9d3" stroke-width="2.2"/><path d="M5 6 L6 23 Q6 24.5 7.5 24.5 L18.5 24.5 Q20 24.5 20 23 L21 6" fill="none" stroke="#c6c9d3" stroke-width="2.4" stroke-linejoin="round"/><line x1="10.5" y1="10" x2="10.5" y2="17" stroke="#c6c9d3" stroke-width="2.4" stroke-linecap="round"/><line x1="15.5" y1="10" x2="15.5" y2="17" stroke="#c6c9d3" stroke-width="2.4" stroke-linecap="round"/></svg>
<div style="position:absolute;left:1650px;top:468px;width:596px;height:446px;box-sizing:border-box;border:8px solid #f54b48;border-radius:12px"></div>
<svg style="position:absolute;left:1715px;top:933px;" width="18" height="18" viewBox="0 0 18 18"><line x1="9" y1="1.5" x2="9" y2="16.5" stroke="#4762ee" stroke-width="3.2" stroke-linecap="round"/><line x1="1.5" y1="9" x2="16.5" y2="9" stroke="#4762ee" stroke-width="3.2" stroke-linecap="round"/></svg>
<div style="position:absolute;left:1741px;top:929.48px;font:400 26.6px/26.6px 'Liberation Sans', sans-serif;color:#4762ee;white-space:nowrap;-webkit-text-stroke:0.3px #4762ee">Add</div>
<div style="position:absolute;left:1717px;top:977.48px;font:400 26.6px/26.6px 'Liberation Sans', sans-serif;color:#1f1f1f;white-space:nowrap;">Hash params</div>
<div style="position:absolute;left:1716px;top:1021px;width:223px;height:62px;box-sizing:border-box;border:2px solid #d6d8df;border-radius:8px;background:#fff"></div>
<div style="position:absolute;left:1956px;top:1021px;width:223px;height:62px;box-sizing:border-box;border:2px solid #d6d8df;border-radius:8px;background:#fff"></div>
<div style="position:absolute;left:1735px;top:1042.39px;font:400 25.6px/25.6px 'Liberation Mono', monospace;color:#9a9a9a;white-space:nowrap;">key</div>
<div style="position:absolute;left:1974.5px;top:1042.39px;font:400 25.6px/25.6px 'Liberation Mono', monospace;color:#9a9a9a;white-space:nowrap;">value</div>
<svg style="position:absolute;left:2199px;top:1039px;" width="26" height="26" viewBox="0 0 26 26"><path d="M3 5 L23 5" stroke="#c6c9d3" stroke-width="2.4" stroke-linecap="round"/><path d="M9.5 5 L10.5 2 L15.5 2 L16.5 5" fill="none" stroke="#c6c9d3" stroke-width="2.2"/><path d="M5 6 L6 23 Q6 24.5 7.5 24.5 L18.5 24.5 Q20 24.5 20 23 L21 6" fill="none" stroke="#c6c9d3" stroke-width="2.4" stroke-linejoin="round"/><line x1="10.5" y1="10" x2="10.5" y2="17" stroke="#c6c9d3" stroke-width="2.4" stroke-linecap="round"/><line x1="15.5" y1="10" x2="15.5" y2="17" stroke="#c6c9d3" stroke-width="2.4" stroke-linecap="round"/></svg>
<svg style="position:absolute;left:1715px;top:1104.5px;" width="18" height="18" viewBox="0 0 18 18"><line x1="9" y1="1.5" x2="9" y2="16.5" stroke="#4762ee" stroke-width="3.2" stroke-linecap="round"/><line x1="1.5" y1="9" x2="16.5" y2="9" stroke="#4762ee" stroke-width="3.2" stroke-linecap="round"/></svg>
<div style="position:absolute;left:1741px;top:1100.98px;font:400 26.6px/26.6px 'Liberation Sans', sans-serif;color:#4762ee;white-space:nowrap;-webkit-text-stroke:0.3px #4762ee">Add</div>
<div style="position:absolute;left:1716px;top:1155px;width:48px;height:28px;background:#dedede;border-radius:14px"></div>
<div style="position:absolute;left:1720px;top:1159px;width:20px;height:20px;background:#fff;border-radius:50%"></div>
<div style="position:absolute;left:1781px;top:1155.98px;font:400 26.6px/26.6px 'Liberation Sans', sans-serif;color:#1f1f1f;white-space:nowrap;">Open in a new tab</div>
<div style="position:absolute;left:2193px;top:1154.30px;font:700 28px/28px 'Liberation Sans', sans-serif;color:#8a8fa5;white-space:nowrap;font-style:italic;letter-spacing:-1.5px">J<span style='font-size:22px'>s</span></div>
<div style="position:absolute;left:1668px;top:1215px;width:48px;height:28px;background:#dedede;border-radius:14px"></div>
<div style="position:absolute;left:1672px;top:1219px;width:20px;height:20px;background:#fff;border-radius:50%"></div>
<div style="position:absolute;left:1733px;top:1215.98px;font:400 26.6px/26.6px 'Liberation Sans', sans-serif;color:#1f1f1f;white-space:nowrap;">Sortable</div>
<div style="position:absolute;left:2193px;top:1214.30px;font:700 28px/28px 'Liberation Sans', sans-serif;color:#8a8fa5;white-space:nowrap;font-style:italic;letter-spacing:-1.5px">J<span style='font-size:22px'>s</span></div>
<div style="position:absolute;left:1668px;top:1275px;width:48px;height:28px;background:#dedede;border-radius:14px"></div>
<div style="position:absolute;left:1672px;top:1279px;width:20px;height:20px;background:#fff;border-radius:50%"></div>
<div style="position:absolute;left:1733px;top:1276.98px;font:400 26.6px/26.6px 'Liberation Sans', sans-serif;color:#1f1f1f;white-space:nowrap;">Hidden</div>
<div style="position:absolute;left:2193px;top:1275.30px;font:700 28px/28px 'Liberation Sans', sans-serif;color:#8a8fa5;white-space:nowrap;font-style:italic;letter-spacing:-1.5px">J<span style='font-size:22px'>s</span></div>
<div style="position:absolute;left:1860px;top:1326px;width:367px;height:56px;background:#eeeff2;border-radius:10px"></div>
<div style="position:absolute;left:1864px;top:1330px;width:120px;height:48px;background:#fff;border-radius:8px;box-shadow:0 1px 3px rgba(0,0,0,0.12)"></div>
<div style="position:absolute;left:1669px;top:1342.48px;font:400 26.6px/26.6px 'Liberation Sans', sans-serif;color:#1f1f1f;white-space:nowrap;">Alignment</div>
<svg style="position:absolute;left:1911px;top:1341px;" width="28" height="26" viewBox="0 0 28 26"><line x1="3" y1="2" x2="3" y2="24" stroke="#1f1f1f" stroke-width="2.8" stroke-linecap="round"/><line x1="9" y1="13" x2="25" y2="13" stroke="#1f1f1f" stroke-width="2.8" stroke-linecap="round"/><polyline points="15,7 9,13 15,19" fill="none" stroke="#1f1f1f" stroke-width="2.8" stroke-linecap="round" stroke-linejoin="round"/></svg>
<svg style="position:absolute;left:2027px;top:1341px;" width="34" height="26" viewBox="0 0 34 26"><line x1="17" y1="2" x2="17" y2="24" stroke="#8a8fa5" stroke-width="2.8" stroke-linecap="round"/><line x1="2" y1="13" x2="11" y2="13" stroke="#8a8fa5" stroke-width="2.8" stroke-linecap="round"/><polyline points="7,8 11.5,13 7,18" fill="none" stroke="#8a8fa5" stroke-width="2.8" stroke-linecap="round" stroke-linejoin="round"/><line x1="23" y1="13" x2="32" y2="13" stroke="#8a8fa5" stroke-width="2.8" stroke-linecap="round"/><polyline points="27,8 22.5,13 27,18" fill="none" stroke="#8a8fa5" stroke-width="2.8" stroke-linecap="round" stroke-linejoin="round"/></svg>
<svg style="position:absolute;left:2150px;top:1341px;" width="28" height="26" viewBox="0 0 28 26"><line x1="25" y1="2" x2="25" y2="24" stroke="#8a8fa5" stroke-width="2.8" stroke-linecap="round"/><line x1="3" y1="13" x2="19" y2="13" stroke="#8a8fa5" stroke-width="2.8" stroke-linecap="round"/><polyline points="13,7 19,13 13,19" fill="none" stroke="#8a8fa5" stroke-width="2.8" stroke-linecap="round" stroke-linejoin="round"/></svg>
<div style="position:absolute;left:1860px;top:1398px;width:367px;height:56px;background:#eeeff2;border-radius:10px"></div>
<div style="position:absolute;left:1984px;top:1402px;width:120px;height:48px;background:#fff;border-radius:8px;box-shadow:0 1px 3px rgba(0,0,0,0.12)"></div>
<div style="position:absolute;left:1669px;top:1414.48px;font:400 26.6px/26.6px 'Liberation Sans', sans-serif;color:#1f1f1f;white-space:nowrap;">Fixed column</div>
<svg style="position:absolute;left:1911px;top:1413px;" width="28" height="26" viewBox="0 0 28 26"><line x1="3" y1="2" x2="3" y2="24" stroke="#8a8fa5" stroke-width="2.8" stroke-linecap="round"/><line x1="9" y1="13" x2="25" y2="13" stroke="#8a8fa5" stroke-width="2.8" stroke-linecap="round"/><polyline points="15,7 9,13 15,19" fill="none" stroke="#8a8fa5" stroke-width="2.8" stroke-linecap="round" stroke-linejoin="round"/></svg>
<div style="position:absolute;left:2033px;top:1424px;width:22px;height:3.5px;background:#1f1f1f;border-radius:1px"></div>
<svg style="position:absolute;left:2150px;top:1413px;" width="28" height="26" viewBox="0 0 28 26"><line x1="25" y1="2" x2="25" y2="24" stroke="#8a8fa5" stroke-width="2.8" stroke-linecap="round"/><line x1="3" y1="13" x2="19" y2="13" stroke="#8a8fa5" stroke-width="2.8" stroke-linecap="round"/><polyline points="13,7 19,13 13,19" fill="none" stroke="#8a8fa5" stroke-width="2.8" stroke-linecap="round" stroke-linejoin="round"/></svg>
<div style="position:absolute;left:1860px;top:1470px;width:367px;height:56px;background:#eeeff2;border-radius:10px"></div>
<div style="position:absolute;left:1864px;top:1474px;width:180px;height:48px;background:#fff;border-radius:8px;box-shadow:0 1px 3px rgba(0,0,0,0.12)"></div>
<div style="position:absolute;left:1669px;top:1486.48px;font:400 26.6px/26.6px 'Liberation Sans', sans-serif;color:#1f1f1f;white-space:nowrap;">Width</div>
<div style="position:absolute;left:1554px;width:800px;text-align:center;top:1486.48px;font:400 26.6px/26.6px 'Liberation Sans', sans-serif;color:#1f1f1f;white-space:nowrap;">Auto</div>
<div style="position:absolute;left:1734px;width:800px;text-align:center;top:1486.48px;font:400 26.6px/26.6px 'Liberation Sans', sans-serif;color:#8a8fa5;white-space:nowrap;">Fixed</div>
<div style="position:absolute;left:1668px;top:1542px;width:559px;height:60px;box-sizing:border-box;border:2px solid #fbc5c5;border-radius:8px;background:#fff5f5"></div>
<div style="position:absolute;left:1547.5px;width:800px;text-align:center;top:1559.48px;font:400 26.6px/26.6px 'Liberation Sans', sans-serif;color:#e52f2f;white-space:nowrap;">Delete</div>
</body></html>
